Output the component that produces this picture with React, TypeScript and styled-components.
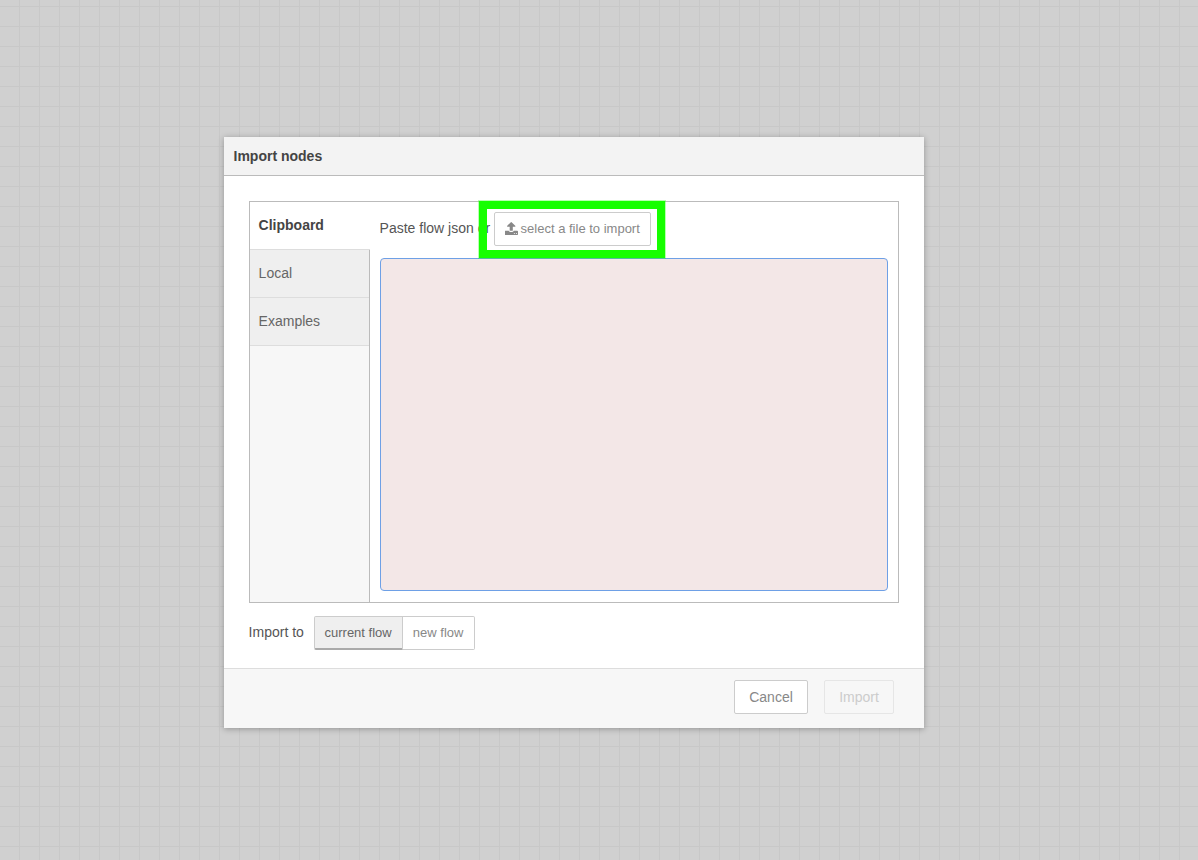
import { FC } from "react";
import styled, { createGlobalStyle } from "styled-components";

const GlobalStyle = createGlobalStyle`
    html, body {
        margin: 0;
        padding: 0;
        height: 100%;
        overflow: hidden;
    }
    body {
        font-family: "Liberation Sans", Arial, sans-serif;
        font-size: 14px;
        color: #555;
    }
`;

const Workspace = styled.main`
    box-sizing: border-box;
    width: 1198px;
    height: 860px;
    padding: 137px 0 0 224px;
    background-color: #d0d0d0;
    background-image:
        linear-gradient(to right, #c8c8c8 1px, transparent 1px),
        linear-gradient(to bottom, #c8c8c8 1px, transparent 1px);
    background-size: 20px 20px;
    background-position: 19px 6px;
`;

const Dialog = styled.section`
    box-sizing: border-box;
    width: 700px;
    height: 591px;
    display: flex;
    flex-direction: column;
    background: #fff;
    box-shadow: 0 1px 6px rgba(0, 0, 0, 0.3);
`;

const DialogTitle = styled.h1`
    box-sizing: border-box;
    height: 39px;
    margin: 0;
    padding: 0 9.5px;
    display: flex;
    align-items: center;
    background: #f3f3f3;
    border-bottom: 1px solid #bbb;
    font-size: 14px;
    font-weight: bold;
    color: #444;
`;

const DialogBody = styled.div`
    flex: 1;
    padding: 25px 25px 0;
`;

const TabFrame = styled.div`
    box-sizing: border-box;
    width: 650px;
    height: 402px;
    display: flex;
    border: 1px solid #bbb;
`;

const TabList = styled.div`
    box-sizing: border-box;
    width: 120px;
    flex: none;
    background: #f7f7f7;
    border-right: 1px solid #bbb;
`;

const Tab = styled.div<{ $active?: boolean }>`
    box-sizing: border-box;
    height: 48px;
    padding: 0 8.6px 2px;
    display: flex;
    align-items: center;
    background: ${(p) => (p.$active ? "#fff" : "#efefef")};
    border-bottom: 1px solid #ddd;
    margin-right: ${(p) => (p.$active ? "-1px" : "0")};
    position: relative;
    font-weight: ${(p) => (p.$active ? "bold" : "normal")};
    color: ${(p) => (p.$active ? "#444" : "#666")};
`;

const TabPane = styled.div`
    flex: 1;
    padding: 10px 10px 11px;
    display: flex;
    flex-direction: column;
`;

const PasteRow = styled.div`
    height: 34px;
    margin-bottom: 12px;
    display: flex;
    align-items: center;
    gap: 3.6px;
    color: #555;
`;

const PasteLabel = styled.span`
    margin-left: -0.4px;
    padding-bottom: 2px;
`;

const UploadButton = styled.button`
    position: relative;
    box-sizing: border-box;
    width: 157px;
    height: 34px;
    padding: 0 0 2px;
    display: flex;
    align-items: center;
    justify-content: center;
    gap: 3px;
    background: #fff;
    border: 1px solid #ccc;
    border-radius: 2px;
    font: 13px "Liberation Sans", Arial, sans-serif;
    color: #888;
`;

const Highlight = styled.span`
    position: absolute;
    top: -12px;
    bottom: -13px;
    left: -16px;
    right: -15px;
    border: 8px solid #16ff00;
    box-shadow: 0 0 0 1px rgba(22, 255, 0, 0.3);
    pointer-events: none;
`;

const JsonInput = styled.textarea`
    flex: 1;
    box-sizing: border-box;
    width: 508px;
    margin: 0;
    padding: 6px;
    resize: none;
    background: #f3e7e7;
    border: 1px solid #6ea0e6;
    border-radius: 4px;
    outline: none;
`;

const ImportRow = styled.div`
    margin-top: 13px;
    display: flex;
    align-items: center;
    color: #555;
`;

const ImportLabel = styled.span`
    width: 65px;
    margin-left: -0.4px;
    padding-bottom: 2px;
`;

const ToggleGroup = styled.div`
    display: flex;
`;

const Toggle = styled.button<{ $selected?: boolean }>`
    box-sizing: border-box;
    height: 34px;
    padding: ${(p) => (p.$selected ? "0" : "0 0 1px")};
    width: ${(p) => (p.$selected ? "89px" : "72px")};
    background: ${(p) => (p.$selected ? "#efefef" : "#fff")};
    border: 1px solid #ccc;
    border-left-width: ${(p) => (p.$selected ? "1px" : "0")};
    border-bottom: ${(p) => (p.$selected ? "2px solid #aaa" : "1px solid #ccc")};
    border-radius: ${(p) => (p.$selected ? "2px 0 0 2px" : "0 2px 2px 0")};
    font: 13px "Liberation Sans", Arial, sans-serif;
    color: ${(p) => (p.$selected ? "#666" : "#888")};
`;

const DialogFooter = styled.footer`
    box-sizing: border-box;
    height: 60px;
    padding: 11px 30px 0 0;
    display: flex;
    justify-content: flex-end;
    gap: 16px;
    background: #f7f7f7;
    border-top: 1px solid #ddd;
`;

const FooterButton = styled.button<{ $disabled?: boolean }>`
    box-sizing: border-box;
    height: 34px;
    padding: 0;
    width: ${(p) => (p.$disabled ? "70px" : "74px")};
    background: ${(p) => (p.$disabled ? "#f7f7f7" : "#fff")};
    border: 1px solid ${(p) => (p.$disabled ? "#e6e6e6" : "#ccc")};
    border-radius: 2px;
    font: 14px "Liberation Sans", Arial, sans-serif;
    color: ${(p) => (p.$disabled ? "#ccc" : "#888")};
`;

const UploadIcon: FC = () => (
    <svg width="13" height="13" viewBox="0 60 1600 1600" fill="#888" aria-hidden="true">
        <path d="M1216 1472q0-26-19-45t-45-19-45 19-19 45 19 45 45 19 45-19 19-45zm256 0q0-26-19-45t-45-19-45 19-19 45 19 45 45 19 45-19 19-45zm128-224v320q0 40-28 68t-68 28h-1472q-40 0-68-28t-28-68v-320q0-40 28-68t68-28h427q21 56 70.5 92t110.5 36h256q61 0 110.5-36t70.5-92h427q40 0 68 28t28 68zm-325-648q-17 40-59 40h-256v448q0 26-19 45t-45 19h-256q-26 0-45-19t-19-45v-448h-256q-42 0-59-40-17-39 14-69l448-448q18-19 45-19t45 19l448 448q31 30 14 69z" />
    </svg>
);

export default function App() {
    return (
        <Workspace>
            <GlobalStyle />
            <Dialog>
                <DialogTitle>Import nodes</DialogTitle>
                <DialogBody>
                    <TabFrame>
                        <TabList>
                            <Tab $active>Clipboard</Tab>
                            <Tab>Local</Tab>
                            <Tab>Examples</Tab>
                        </TabList>
                        <TabPane>
                            <PasteRow>
                                <PasteLabel>Paste flow json or</PasteLabel>
                                <UploadButton>
                                    <UploadIcon />
                                    select a file to import
                                    <Highlight />
                                </UploadButton>
                            </PasteRow>
                            <JsonInput />
                        </TabPane>
                    </TabFrame>
                    <ImportRow>
                        <ImportLabel>Import to</ImportLabel>
                        <ToggleGroup>
                            <Toggle $selected>current flow</Toggle>
                            <Toggle>new flow</Toggle>
                        </ToggleGroup>
                    </ImportRow>
                </DialogBody>
                <DialogFooter>
                    <FooterButton>Cancel</FooterButton>
                    <FooterButton $disabled>Import</FooterButton>
                </DialogFooter>
            </Dialog>
        </Workspace>
    );
}
